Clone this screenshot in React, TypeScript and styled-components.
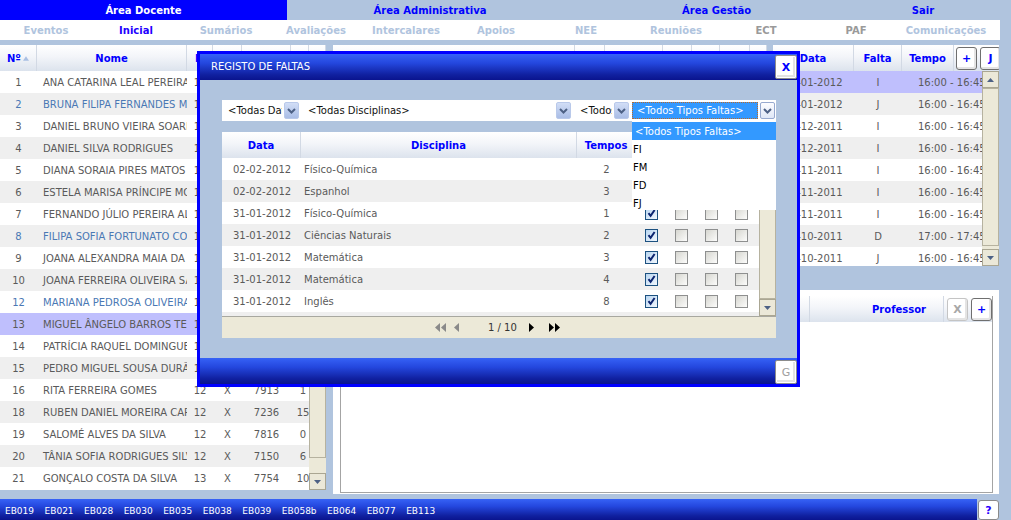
import styled, { createGlobalStyle } from "styled-components";

const GlobalStyle = createGlobalStyle`
  body {
    margin: 0;
    background: #b0c4de;
    font-family: "DejaVu Sans", Verdana, sans-serif;
    font-size: 10px;
    color: #555;
  }
`;

type Tone = "white" | "grey" | "sel";

const students = [
    { n: 1, name: "ANA CATARINA LEAL PEREIRA", ano: 12, proc: 7104, f: 3 },
    { n: 2, name: "BRUNA FILIPA FERNANDES MOTA", ano: 12, proc: 7122, f: 2, blue: true },
    { n: 3, name: "DANIEL BRUNO VIEIRA SOARES", ano: 12, proc: 7230, f: 4 },
    { n: 4, name: "DANIEL SILVA RODRIGUES", ano: 12, proc: 7241, f: 0 },
    { n: 5, name: "DIANA SORAIA PIRES MATOS", ano: 12, proc: 7318, f: 1 },
    { n: 6, name: "ESTELA MARISA PRÍNCIPE MOURA", ano: 12, proc: 7402, f: 2 },
    { n: 7, name: "FERNANDO JÚLIO PEREIRA ALVES", ano: 12, proc: 7455, f: 5 },
    { n: 8, name: "FILIPA SOFIA FORTUNATO COSTA", ano: 12, proc: 7511, f: 0, blue: true },
    { n: 9, name: "JOANA ALEXANDRA MAIA DA SILVA", ano: 12, proc: 7590, f: 3 },
    { n: 10, name: "JOANA FERREIRA OLIVEIRA SANTOS", ano: 12, proc: 7634, f: 1 },
    { n: 12, name: "MARIANA PEDROSA OLIVEIRA", ano: 12, proc: 7688, f: 2, blue: true },
    { n: 13, name: "MIGUEL ÂNGELO BARROS TEIXEIRA", ano: 12, proc: 7702, f: 4, sel: true },
    { n: 14, name: "PATRÍCIA RAQUEL DOMINGUES", ano: 12, proc: 7745, f: 0 },
    { n: 15, name: "PEDRO MIGUEL SOUSA DURÃO", ano: 12, proc: 7790, f: 2 },
    { n: 16, name: "RITA FERREIRA GOMES", ano: 12, proc: 7913, f: 1 },
    { n: 18, name: "RUBEN DANIEL MOREIRA CARVALHO", ano: 12, proc: 7236, f: 15 },
    { n: 19, name: "SALOMÉ ALVES DA SILVA", ano: 12, proc: 7816, f: 0 },
    { n: 20, name: "TÂNIA SOFIA RODRIGUES SILVA", ano: 12, proc: 7150, f: 6 },
    { n: 21, name: "GONÇALO COSTA DA SILVA", ano: 13, proc: 7754, f: 10 },
];

const faltas = [
    { d: "27-01-2012", f: "I", t: "16:00 - 16:45" },
    { d: "20-01-2012", f: "J", t: "16:00 - 16:45" },
    { d: "16-12-2011", f: "I", t: "16:00 - 16:45" },
    { d: "09-12-2011", f: "I", t: "16:00 - 16:45" },
    { d: "25-11-2011", f: "I", t: "16:00 - 16:45" },
    { d: "18-11-2011", f: "I", t: "16:00 - 16:45" },
    { d: "11-11-2011", f: "I", t: "16:00 - 16:45" },
    { d: "28-10-2011", f: "D", t: "17:00 - 17:45" },
    { d: "21-10-2011", f: "J", t: "16:00 - 16:45" },
];

const registos = [
    { d: "02-02-2012", disc: "Físico-Química", t: 2 },
    { d: "02-02-2012", disc: "Espanhol", t: 3 },
    { d: "31-01-2012", disc: "Físico-Química", t: 1 },
    { d: "31-01-2012", disc: "Ciências Naturais", t: 2 },
    { d: "31-01-2012", disc: "Matemática", t: 3 },
    { d: "31-01-2012", disc: "Matemática", t: 4 },
    { d: "31-01-2012", disc: "Inglês", t: 8 },
    { d: "30-01-2012", disc: "Português", t: 1 },
];

const topTabs = ["Área Docente", "Área Administrativa", "Área Gestão", "Sair"];
const subTabs = ["Eventos", "Inicial", "Sumários", "Avaliações", "Intercalares", "Apoios", "NEE", "Reuniões", "ECT", "PAF", "Comunicações"];
const escolas = ["EB019", "EB021", "EB028", "EB030", "EB035", "EB038", "EB039", "EB058b", "EB064", "EB077", "EB113"];
const tiposFalta = ["<Todos Tipos Faltas>", "FI", "FM", "FD", "FJ"];

const blueBar = "linear-gradient(#3662f6 0%, #2447de 35%, #10209f 80%, #0a148e 100%)";

const Page = styled.div`
    position: relative;
    width: 1000px;
    height: 520px;
    display: flex;
    flex-direction: column;
    overflow: hidden;
`;

const TopTabs = styled.nav`
    display: grid;
    grid-template-columns: 287px 286px 287px 126px;
    height: 20px;
`;

const TopTab = styled.div<{ $active?: boolean }>`
    display: flex;
    align-items: center;
    justify-content: center;
    font-weight: bold;
    color: ${({ $active }) => ($active ? "#fff" : "#0000ff")};
    background: ${({ $active }) => ($active ? "#0000ff" : "transparent")};
`;

const SubNav = styled.nav`
    display: grid;
    grid-template-columns: repeat(11, 90px);
    height: 20px;
    padding-left: 1px;
    background: #fff;
`;

const SubItem = styled.div<{ $tone: "off" | "on" | "dim" }>`
    display: flex;
    align-items: center;
    justify-content: center;
    font-weight: bold;
    color: ${({ $tone }) => ($tone === "on" ? "#2200ff" : $tone === "dim" ? "#9a9a9a" : "#b0c4de")};
`;

const Main = styled.div`
    display: flex;
    gap: 7px;
    margin-top: 5px;
    height: 449px;
`;

const LeftPanel = styled.section`
    width: 326px;
    height: 445px;
    background: #fff;
    display: flex;
    flex-direction: column;
`;

const HeadRow = styled.div<{ $cols: string }>`
    display: grid;
    grid-template-columns: ${({ $cols }) => $cols};
    height: 26px;
    flex: none;
    background: linear-gradient(#ffffff 0%, #f3f5f9 45%, #dce3ed 100%);
`;

const FlexHead = styled.div`
    display: flex;
    align-items: center;
    height: 26px;
    flex: none;
    background: linear-gradient(#ffffff 0%, #f3f5f9 45%, #dce3ed 100%);
`;

const HeadCell = styled.div<{ $w?: number; $align?: "left" | "center" | "right"; $pad?: number }>`
    display: flex;
    align-items: center;
    justify-content: ${({ $align }) => ($align === "left" ? "flex-start" : $align === "right" ? "flex-end" : "center")};
    gap: 2px;
    ${({ $w }) => ($w ? `width: ${$w}px; flex: none;` : "flex: 1;")}
    height: 100%;
    box-sizing: border-box;
    padding: 0 ${({ $pad }) => $pad ?? 0}px;
    border-right: 1px solid #d2d9e4;
    color: #0000ff;
    font-weight: bold;
    white-space: nowrap;
    overflow: hidden;
`;

const Body = styled.div<{ $h?: number }>`
    display: flex;
    flex: 1;
    min-height: 0;
    overflow: hidden;
`;

const Rows = styled.div<{ $w: number }>`
    width: ${({ $w }) => $w}px;
    flex: none;
    overflow: hidden;
`;

const Row = styled.div<{ $cols: string; $tone: Tone }>`
    display: grid;
    grid-template-columns: ${({ $cols }) => $cols};
    height: 22px;
    background: ${({ $tone }) => ($tone === "sel" ? "#bfbffd" : $tone === "grey" ? "#efefef" : "#fff")};
`;

const Cell = styled.div<{ $align?: "left" | "center"; $pad?: number; $blue?: boolean; $ink?: string }>`
    display: flex;
    align-items: center;
    justify-content: ${({ $align }) => ($align === "left" ? "flex-start" : "center")};
    padding-left: ${({ $pad }) => $pad ?? 0}px;
    color: ${({ $blue, $ink }) => $ink ?? ($blue ? "#4a78b4" : "#5a5a5a")};
    white-space: nowrap;
    overflow: hidden;
`;

const ScrollBox = styled.div`
    width: 17px;
    flex: none;
    display: flex;
    flex-direction: column;
    background: #ece9d8;
`;

const ScrollBtn = styled.div`
    height: 17px;
    flex: none;
    box-sizing: border-box;
    border: 1px solid #aaa692;
    background: #ebe8d8;
    display: flex;
    align-items: center;
    justify-content: center;
`;

const ScrollTrack = styled.div<{ $gap: number }>`
    flex: 1;
    display: flex;
    flex-direction: column;
    padding-bottom: ${({ $gap }) => $gap}px;
`;

const ScrollThumb = styled.div`
    flex: 1;
    box-sizing: border-box;
    border: 1px solid #b6b29f;
    background: #ece9d8;
`;

const RightCol = styled.div`
    width: 666px;
    display: flex;
    flex-direction: column;
`;

const TopRight = styled.div`
    display: flex;
    gap: 6px;
    height: 221px;
    flex: none;
`;

const Panel = styled.section<{ $w: number }>`
    width: ${({ $w }) => $w}px;
    background: #fff;
    display: flex;
    flex-direction: column;
    overflow: hidden;
`;

const HeadBtn = styled.button<{ $off?: boolean }>`
    width: 21px;
    height: 23px;
    flex: none;
    margin-left: 3px;
    padding: 0;
    box-sizing: border-box;
    border: 1px solid ${({ $off }) => ($off ? "#c4c4c4" : "#6f6f6f")};
    border-radius: 3px;
    background: #fff;
    box-shadow: inset -1px -1px 0 1px #e4e4e4;
    color: ${({ $off }) => ($off ? "#a8a8a8" : "#0000ff")};
    font-family: "DejaVu Sans", Verdana, sans-serif;
    font-size: 11px;
    font-weight: bold;
`;

const LowerPanel = styled.section`
    margin-top: 24px;
    flex: 1;
    background: #fff;
    padding: 6px 6px 1px 7px;
    box-sizing: border-box;
    display: flex;
`;

const LowerBox = styled.div`
    flex: 1;
    border: 1px solid #a4a4a4;
    border-top: none;
    display: flex;
    flex-direction: column;
`;

const BottomRow = styled.footer`
    display: flex;
    margin-top: 5px;
    height: 21px;
`;

const SchoolBar = styled.div`
    width: 977px;
    display: flex;
    align-items: center;
    gap: 10.5px;
    padding: 2px 0 0 5px;
    box-sizing: border-box;
    background: ${blueBar};
    color: #fff;
    font-size: 9px;
`;

const HelpBtn = styled.button`
    width: 21px;
    height: 20px;
    margin-left: 1px;
    align-self: flex-end;
    padding: 0;
    border: 1px solid #8a8a8a;
    border-radius: 3px;
    background: #fff;
    color: #2a00ff;
    font-family: "DejaVu Sans", Verdana, sans-serif;
    font-size: 11px;
    font-weight: bold;
`;

/* modal */

const Modal = styled.div`
    position: absolute;
    left: 197px;
    top: 51px;
    width: 603px;
    height: 336px;
    box-sizing: border-box;
    border: 3px solid #0000ff;
    display: flex;
    flex-direction: column;
    background: #b0c4de;
`;

const TitleBar = styled.div`
    height: 26px;
    flex: none;
    display: flex;
    align-items: flex-start;
    justify-content: space-between;
    background: ${blueBar};
`;

const Title = styled.span`
    color: #fff;
    font-size: 10px;
    padding: 7px 0 0 11px;
`;

const WinBtn = styled.button<{ $muted?: boolean }>`
    width: 22px;
    height: 24px;
    margin-top: ${({ $muted }) => ($muted ? 2 : 1)}px;
    padding: 0;
    box-sizing: border-box;
    border: 1px solid #8c8c8c;
    border-radius: 2px;
    background: #fff;
    box-shadow: inset 0 0 0 1px #fff, inset -1px -1px 0 2px #e2e2e2;
    color: ${({ $muted }) => ($muted ? "#a0a0a0" : "#0000ff")};
    font-family: "DejaVu Sans", Verdana, sans-serif;
    font-size: 11px;
    font-weight: ${({ $muted }) => ($muted ? "normal" : "bold")};
`;

const ModalBody = styled.div`
    flex: 1;
    padding: 20px 21px 0 22px;
`;

const FooterBar = styled.div`
    height: 26px;
    flex: none;
    display: flex;
    justify-content: flex-end;
    background: ${blueBar};
`;

const FilterRow = styled.div`
    display: flex;
    gap: 2px;
    height: 21px;
    background: #fff;
`;

const Select = styled.div<{ $w: number }>`
    position: relative;
    width: ${({ $w }) => $w}px;
    flex: none;
    display: flex;
    align-items: center;
    gap: 2px;
    color: #111;
`;

const SelectText = styled.div<{ $open?: boolean }>`
    flex: 1;
    height: ${({ $open }) => ($open ? "17px" : "auto")};
    display: flex;
    align-items: center;
    padding-left: ${({ $open }) => ($open ? 4 : 6)}px;
    box-sizing: border-box;
    white-space: nowrap;
    overflow: hidden;
    color: ${({ $open }) => ($open ? "#fff" : "#111")};
    background: ${({ $open }) => ($open ? "#3399ff" : "transparent")};
    border: ${({ $open }) => ($open ? "1px dotted #b86a2a" : "none")};
`;

const ArrowBtn = styled.div<{ $open?: boolean }>`
    width: 15px;
    height: 17px;
    flex: none;
    margin-right: 1px;
    box-sizing: border-box;
    border-radius: 2px;
    border: 1px solid ${({ $open }) => ($open ? "#97a9cf" : "#b9c9ea")};
    background: ${({ $open }) => ($open ? "linear-gradient(#fdfdff, #dfe7f7)" : "linear-gradient(#d2def6, #a9bde6)")};
    display: flex;
    align-items: center;
    justify-content: center;
`;

const DropList = styled.ul`
    position: absolute;
    top: 21px;
    left: 0;
    width: 144px;
    height: 89px;
    margin: 0;
    padding: 1px 0 0;
    box-sizing: border-box;
    list-style: none;
    background: #fff;
    overflow: hidden;
    z-index: 2;
`;

const DropItem = styled.li<{ $hl?: boolean }>`
    height: 18px;
    display: flex;
    align-items: center;
    padding-left: ${({ $hl }) => ($hl ? 3 : 1)}px;
    background: ${({ $hl }) => ($hl ? "#3399ff" : "transparent")};
    color: ${({ $hl }) => ($hl ? "#fff" : "#000")};
`;

const Grid = styled.div`
    margin-top: 11px;
    width: 554px;
    display: flex;
    flex-direction: column;
`;

const GridBody = styled.div`
    height: 158px;
    display: flex;
    background: #fff;
`;

const Pager = styled.div`
    height: 22px;
    box-sizing: border-box;
    border-top: 1px solid #a8a8a0;
    background: #ece9d8;
    display: flex;
    align-items: center;
    padding-left: 213px;
    color: #333;
`;

const PagerIcon = styled.svg<{ $gap: number }>`
    margin-right: ${({ $gap }) => $gap}px;
    flex: none;
`;

const PageText = styled.span`
    margin-right: 12px;
`;

const Check = styled.span<{ $on: boolean }>`
    width: 13px;
    height: 13px;
    box-sizing: border-box;
    border: 1px solid ${({ $on }) => ($on ? "#1c5180" : "#8e8f8f")};
    background: ${({ $on }) =>
        $on ? "linear-gradient(135deg, #b9d6f1, #f1f7fd)" : "linear-gradient(135deg, #d6d6d0, #fcfcfb)"};
    display: inline-flex;
    align-items: center;
    justify-content: center;
`;

const Chevron = () => (
    <svg width="9" height="6" viewBox="0 0 9 6">
        <path d="M1 1l3.5 3.5L8 1" stroke="#4d6185" strokeWidth="2" fill="none" />
    </svg>
);

const Tri = ({ up }: { up?: boolean }) => (
    <svg width="7" height="4" viewBox="0 0 7 4">
        <path d={up ? "M0 4h7L3.5 0z" : "M0 0h7L3.5 4z"} fill="#4d6185" />
    </svg>
);

const Scrollbar = ({ gap }: { gap: number }) => (
    <ScrollBox>
        <ScrollBtn><Tri up /></ScrollBtn>
        <ScrollTrack $gap={gap}><ScrollThumb /></ScrollTrack>
        <ScrollBtn><Tri /></ScrollBtn>
    </ScrollBox>
);

const tone = (i: number, sel?: boolean): Tone => (sel ? "sel" : i % 2 ? "grey" : "white");

const LEFT_COLS = "37px 150px 26px 29px 49px 24px";
const FALTA_COLS = "81px 48px 80px";
const REG_COLS = "79px 276px 59px 30px 30px 30px 30px 3px";

const App = () => {
    return (
        <>
            <GlobalStyle />
            <Page>
                <TopTabs>
                    {topTabs.map((t, i) => (
                        <TopTab key={t} $active={i === 0}>{t}</TopTab>
                    ))}
                </TopTabs>
                <SubNav>
                    {subTabs.map((t) => (
                        <SubItem key={t} $tone={t === "Inicial" ? "on" : t === "ECT" || t === "PAF" ? "dim" : "off"}>{t}</SubItem>
                    ))}
                </SubNav>

                <Main>
                    <LeftPanel>
                        <HeadRow $cols="37px 150px 26px 29px 49px 18px 17px">
                            <HeadCell $align="left" $pad={7}>
                                Nº
                                <svg width="7" height="5" viewBox="0 0 7 5"><path d="M0 5h7L3.5 0z" fill="#a9bfe3" /></svg>
                            </HeadCell>
                            <HeadCell>Nome</HeadCell>
                            <HeadCell $align="left" $pad={8}>Id</HeadCell>
                            <HeadCell>T</HeadCell>
                            <HeadCell>Proc.</HeadCell>
                            <HeadCell>F</HeadCell>
                            <HeadCell />
                        </HeadRow>
                        <Body>
                            <Rows $w={309}>
                                {students.map((s, i) => (
                                    <Row key={s.n} $cols={LEFT_COLS} $tone={tone(i, s.sel)}>
                                        <Cell $blue={s.blue}>{s.n}</Cell>
                                        <Cell $align="left" $pad={6} $blue={s.blue}>{s.name}</Cell>
                                        <Cell>{s.ano}</Cell>
                                        <Cell>X</Cell>
                                        <Cell>{s.proc}</Cell>
                                        <Cell>{s.f}</Cell>
                                    </Row>
                                ))}
                            </Rows>
                            <Scrollbar gap={15} />
                        </Body>
                    </LeftPanel>

                    <RightCol>
                        <TopRight>
                            <Panel $w={434}>
                                <HeadRow $cols="242px 30px 58px 29px 28px 30px 17px">
                                    <HeadCell>Disciplina</HeadCell>
                                    <HeadCell>T</HeadCell>
                                    <HeadCell>Sala</HeadCell>
                                    <HeadCell>2ª</HeadCell>
                                    <HeadCell>3ª</HeadCell>
                                    <HeadCell>4ª</HeadCell>
                                    <HeadCell />
                                </HeadRow>
                            </Panel>
                            <Panel $w={226}>
                                <FlexHead>
                                    <HeadCell $w={81}>Data</HeadCell>
                                    <HeadCell $w={48}>Falta</HeadCell>
                                    <HeadCell $w={52}>Tempo</HeadCell>
                                    <HeadBtn style={{ marginLeft: 2 }}>+</HeadBtn>
                                    <HeadBtn>J</HeadBtn>
                                </FlexHead>
                                <Body>
                                    <Rows $w={209}>
                                        {faltas.map((f, i) => (
                                            <Row key={f.d} $cols={FALTA_COLS} $tone={i === 0 ? "sel" : tone(i)}>
                                                <Cell>{f.d}</Cell>
                                                <Cell>{f.f}</Cell>
                                                <Cell $align="left" $pad={16}>{f.t}</Cell>
                                            </Row>
                                        ))}
                                    </Rows>
                                    <Scrollbar gap={3} />
                                </Body>
                            </Panel>
                        </TopRight>

                        <LowerPanel>
                            <LowerBox>
                                <FlexHead>
                                    <HeadCell>Disciplina</HeadCell>
                                    <HeadCell $w={134} $align="right" $pad={17}>Professor</HeadCell>
                                    <HeadBtn $off>X</HeadBtn>
                                    <HeadBtn>+</HeadBtn>
                                </FlexHead>
                            </LowerBox>
                        </LowerPanel>
                    </RightCol>
                </Main>

                <BottomRow>
                    <SchoolBar>
                        {escolas.map((e) => (
                            <span key={e}>{e}</span>
                        ))}
                    </SchoolBar>
                    <HelpBtn>?</HelpBtn>
                </BottomRow>

                <Modal>
                    <TitleBar>
                        <Title>REGISTO DE FALTAS</Title>
                        <WinBtn>X</WinBtn>
                    </TitleBar>
                    <ModalBody>
                        <FilterRow>
                            <Select $w={78}>
                                <SelectText>&lt;Todas Datas&gt;</SelectText>
                                <ArrowBtn><Chevron /></ArrowBtn>
                            </Select>
                            <Select $w={270}>
                                <SelectText>&lt;Todas Disciplinas&gt;</SelectText>
                                <ArrowBtn><Chevron /></ArrowBtn>
                            </Select>
                            <Select $w={56}>
                                <SelectText>&lt;Todos Tempos&gt;</SelectText>
                                <ArrowBtn><Chevron /></ArrowBtn>
                            </Select>
                            <Select $w={144}>
                                <SelectText $open>&lt;Todos Tipos Faltas&gt;</SelectText>
                                <ArrowBtn $open><Chevron /></ArrowBtn>
                                <DropList>
                                    {tiposFalta.map((t, i) => (
                                        <DropItem key={t} $hl={i === 0}>{t}</DropItem>
                                    ))}
                                </DropList>
                            </Select>
                        </FilterRow>

                        <Grid>
                            <FlexHead>
                                <HeadCell $w={79}>Data</HeadCell>
                                <HeadCell $w={276}>Disciplina</HeadCell>
                                <HeadCell $w={59}>Tempos</HeadCell>
                                <HeadCell $w={30}>FI</HeadCell>
                                <HeadCell $w={30}>FM</HeadCell>
                                <HeadCell $w={30}>FD</HeadCell>
                                <HeadCell $w={30}>FJ</HeadCell>
                                <HeadCell />
                            </FlexHead>
                            <GridBody>
                                <Rows $w={537}>
                                    {registos.map((r, i) => (
                                        <Row key={i} $cols={REG_COLS} $tone={tone(i)}>
                                            <Cell $align="left" $pad={11}>{r.d}</Cell>
                                            <Cell $align="left" $pad={3}>{r.disc}</Cell>
                                            <Cell>{r.t}</Cell>
                                            {[true, false, false, false].map((on, k) => (
                                                <Cell key={k}>
                                                    <Check $on={on}>
                                                        {on && (
                                                            <svg width="9" height="9" viewBox="0 0 9 9">
                                                                <path d="M1.5 4.2L3.6 6.8L7.6 1" stroke="#0b2470" strokeWidth="2" fill="none" />
                                                            </svg>
                                                        )}
                                                    </Check>
                                                </Cell>
                                            ))}
                                            <Cell />
                                        </Row>
                                    ))}
                                </Rows>
                                <Scrollbar gap={0} />
                            </GridBody>
                            <Pager>
                                <PagerIcon $gap={8} width="11" height="9" viewBox="0 0 11 9">
                                    <path d="M5 0v9L0 4.5zM11 0v9L6 4.5z" fill="#8a8a8a" />
                                </PagerIcon>
                                <PagerIcon $gap={29} width="5" height="9" viewBox="0 0 5 9">
                                    <path d="M5 0v9L0 4.5z" fill="#8a8a8a" />
                                </PagerIcon>
                                <PageText>1 / 10</PageText>
                                <PagerIcon $gap={15} width="5" height="9" viewBox="0 0 5 9">
                                    <path d="M0 0v9L5 4.5z" fill="#000" />
                                </PagerIcon>
                                <PagerIcon $gap={0} width="11" height="9" viewBox="0 0 11 9">
                                    <path d="M0 0v9L5 4.5zM6 0v9L11 4.5z" fill="#000" />
                                </PagerIcon>
                            </Pager>
                        </Grid>
                    </ModalBody>
                    <FooterBar>
                        <WinBtn $muted>G</WinBtn>
                    </FooterBar>
                </Modal>
            </Page>
        </>
    );
};

export default App;
